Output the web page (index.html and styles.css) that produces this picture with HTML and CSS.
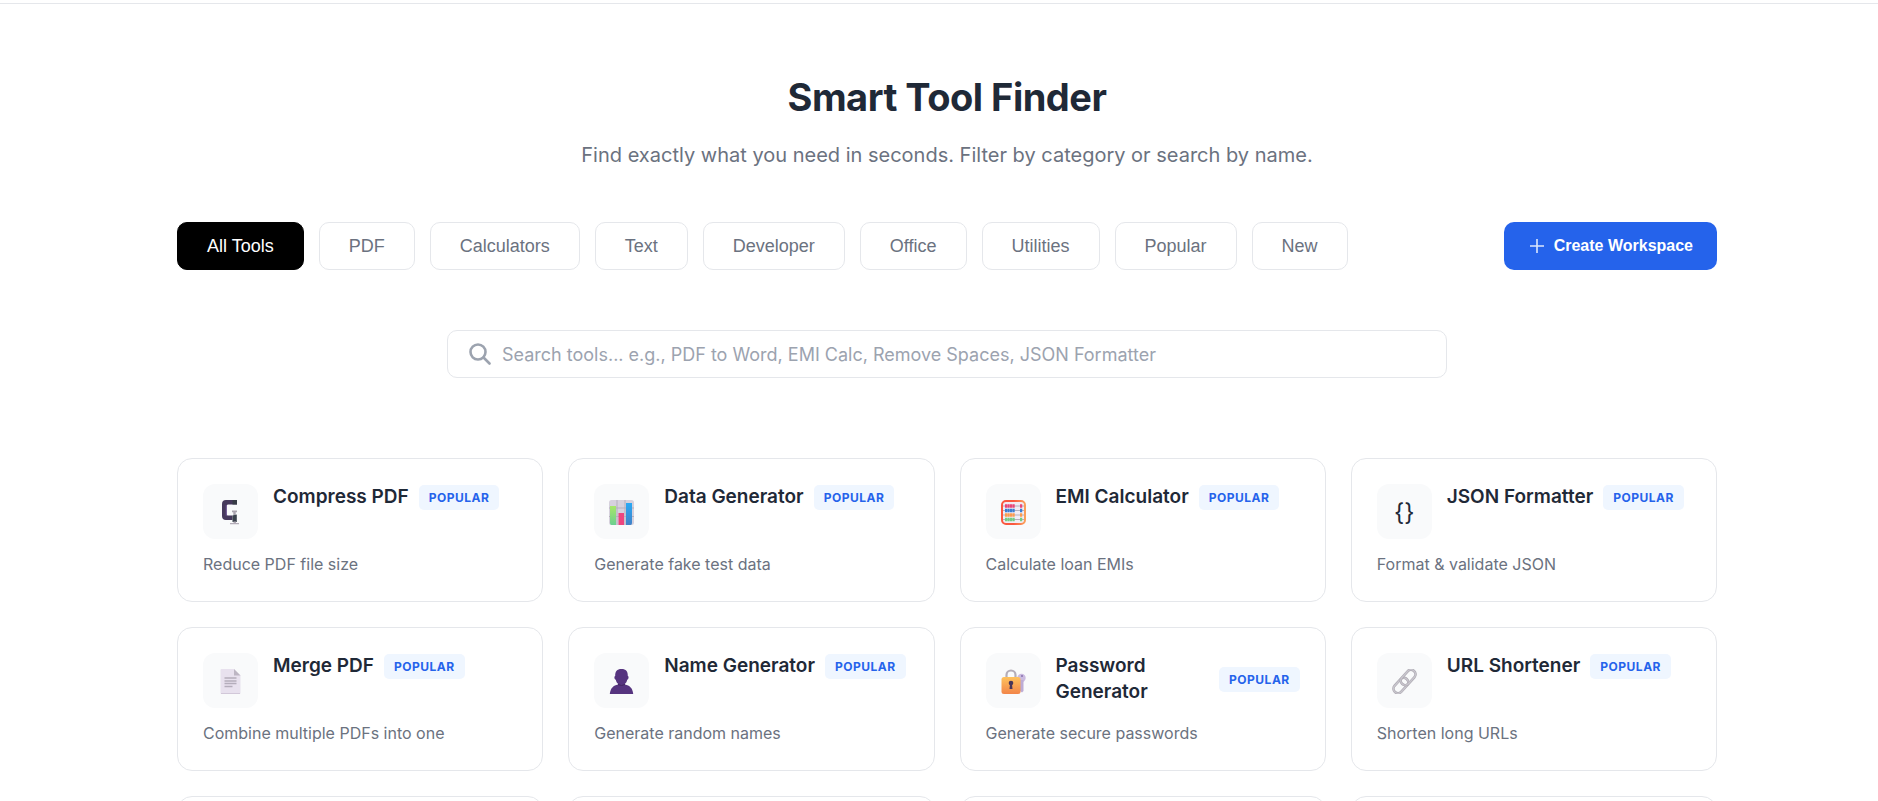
FILE: index.html
```
<!DOCTYPE html>
<html lang="en">
<head>
    <meta charset="UTF-8">
    <meta name="viewport" content="width=device-width, initial-scale=1.0">
    <title>Smart Tool Finder</title>
    <link rel="stylesheet" href="styles.css">
</head>
<body>
    <header class="topbar"></header>

    <main class="finder">
        <div class="finder-header">
            <h1>Smart Tool Finder</h1>
            <p>Find exactly what you need in seconds. Filter by category or search by name.</p>
        </div>

        <div class="toolbar">
            <div class="filters">
                <button type="button" class="filter-btn active">All Tools</button>
                <button type="button" class="filter-btn">PDF</button>
                <button type="button" class="filter-btn">Calculators</button>
                <button type="button" class="filter-btn">Text</button>
                <button type="button" class="filter-btn">Developer</button>
                <button type="button" class="filter-btn">Office</button>
                <button type="button" class="filter-btn">Utilities</button>
                <button type="button" class="filter-btn">Popular</button>
                <button type="button" class="filter-btn">New</button>
            </div>
            <button type="button" class="create-btn">
                <svg width="18" height="18" viewBox="0 0 18 18" fill="none" stroke="#dbe6fd" stroke-width="1.6"><path d="M9 2v14M2 9h14"/></svg>
                Create Workspace
            </button>
        </div>

        <label class="search-box">
            <svg width="22" height="22" viewBox="0 0 22 22" fill="none" stroke="#9ca3af" stroke-width="2.6" stroke-linecap="round"><circle cx="9" cy="9" r="7.5"/><path d="M14.5 14.5l6 6"/></svg>
            <input type="text" aria-label="Search tools" placeholder="Search tools... e.g., PDF to Word, EMI Calc, Remove Spaces, JSON Formatter">
        </label>

        <div class="tools-grid">
            <a href="#" class="tool-card">
                <div class="tool-top">
                    <div class="tool-icon">
                        <!-- clamp -->
                        <svg width="25" height="25" viewBox="0 0 25 25"><path d="M19 0v4.500h-9q-1.500 0-1.500 1.500v8q0 1.500 1.500 1.500h4.500V20H8q-4 0-4-4V4q0-4 4-4z" fill="#46395c"/><path d="M8.200 5v11" stroke="#65488d"/><path d="M14.500 0H19v4.500h-4.500z" fill="#373c46"/><path d="M14 10.500h5v1.800h-1.300v3.700h-2.400v-3.700H14z" fill="#a9a3ae"/><path d="M14.500 15.500l4.300-1v7.500h-4.300z" fill="#3b434d"/><path d="M15.500 21.500H18V23h3v1.300h-9V23h3.500z" fill="#b4adb8"/></svg>
                    </div>
                    <div class="tool-title"><h3>Compress PDF</h3><span class="badge">POPULAR</span></div>
                </div>
                <p>Reduce PDF file size</p>
            </a>
            <a href="#" class="tool-card">
                <div class="tool-top">
                    <div class="tool-icon">
                        <!-- bar chart -->
                        <svg width="25" height="25" viewBox="0 0 25 25"><defs><linearGradient id="bar-green" x2="0" y2="1"><stop stop-color="#a8e768"/><stop offset="1" stop-color="#6bcf91"/></linearGradient><linearGradient id="bar-blue" x2="0" y2="1"><stop stop-color="#29a9f5"/><stop offset="1" stop-color="#4281c7"/></linearGradient></defs><rect width="25" height="25" rx="2.500" fill="#d6d1dd"/><path d="M8 0v25M16 0v25M0 8h25M0 16.500h25" stroke="#b5afbd"/><path d="M1 6h6v19H2.500Q1 25 1 23z" fill="url(#bar-green)"/><path d="M9.500 13h5.500v12H9.500z" fill="#ed457f"/><path d="M17 3h6v20q0 2-1.500 2H17z" fill="url(#bar-blue)"/></svg>
                    </div>
                    <div class="tool-title"><h3>Data Generator</h3><span class="badge">POPULAR</span></div>
                </div>
                <p>Generate fake test data</p>
            </a>
            <a href="#" class="tool-card">
                <div class="tool-top">
                    <div class="tool-icon">
                        <!-- abacus -->
                        <svg width="25" height="25" viewBox="0 0 25 25"><defs><linearGradient id="frame"><stop offset=".5" stop-color="#fa583f"/><stop offset="1" stop-color="#fba05b"/></linearGradient></defs><rect x="1" y="1" width="23" height="23" rx="4" fill="#f0edf5" stroke="url(#frame)" stroke-width="2"/><path d="M2 6h21M2 10.500h21M2 15h21M2 19.500h21" stroke="#a5a0ab" stroke-width=".8"/><g stroke-width="3.600" stroke-dasharray="2.200 .3"><path d="M4 6h10M19 6h2.200" stroke="#e84678"/><path d="M4 10.500h10M19 10.500h2.200" stroke="#397ed3"/><path d="M4 15h10M19 15h2.200" stroke="#fb9c50"/><path d="M4 19.500h10M19 19.500h2.200" stroke="#72cd85"/></g></svg>
                    </div>
                    <div class="tool-title"><h3>EMI Calculator</h3><span class="badge">POPULAR</span></div>
                </div>
                <p>Calculate loan EMIs</p>
            </a>
            <a href="#" class="tool-card">
                <div class="tool-top">
                    <div class="tool-icon">{}</div>
                    <div class="tool-title"><h3>JSON Formatter</h3><span class="badge">POPULAR</span></div>
                </div>
                <p>Format &amp; validate JSON</p>
            </a>
            <a href="#" class="tool-card">
                <div class="tool-top">
                    <div class="tool-icon">
                        <!-- page -->
                        <svg width="25" height="25" viewBox="0 0 25 25"><path d="M2.500 1q0-1 1-1H16l6.500 6.500V24q0 1-1 1h-18q-1 0-1-1z" fill="#e8e1ee"/><path d="M16 0l6.500 6.500H16z" fill="#bdb6c3"/><path d="M6.500 9h12M6.500 12h12M6.500 14.500h12M6.500 17.500h8" stroke="#b4adbb" stroke-width="1.300"/><path d="M3 24.500h19" stroke="#d2c8d9"/></svg>
                    </div>
                    <div class="tool-title"><h3>Merge PDF</h3><span class="badge">POPULAR</span></div>
                </div>
                <p>Combine multiple PDFs into one</p>
            </a>
            <a href="#" class="tool-card">
                <div class="tool-top">
                    <div class="tool-icon">
                        <!-- person -->
                        <svg width="25" height="25" viewBox="0 0 25 25" fill="#56347f"><path d="M12.500 0C8 0 6 2.500 6.200 7c-1.200 0-1 3.500.6 3.800.3 2 1.200 3 2.200 4v2.500h7v-2.500c1-1 1.900-2 2.200-4 1.600-.3 1.800-3.800.6-3.800C19 2.500 17 0 12.500 0z"/><path d="M.8 25c.5-6 3.700-8.500 8.200-9.500h7c4.500 1 7.700 3.500 8.200 9.500z"/><path d="M9 15.500q3.500 2 7 0" fill="none" stroke="#41255f"/></svg>
                    </div>
                    <div class="tool-title"><h3>Name Generator</h3><span class="badge">POPULAR</span></div>
                </div>
                <p>Generate random names</p>
            </a>
            <a href="#" class="tool-card">
                <div class="tool-top">
                    <div class="tool-icon">
                        <!-- padlock with key -->
                        <svg width="25" height="25" viewBox="0 0 25 25"><defs><linearGradient id="lock" x2="0" y2="1"><stop stop-color="#ffc25c"/><stop offset="1" stop-color="#f28549"/></linearGradient></defs><path d="M5.500 9V6a4.500 4.500 0 0 1 9 0v3" fill="none" stroke="#b4adb8" stroke-width="2.200"/><circle cx="20.500" cy="9" r="4.200" fill="#cbbbe0"/><path d="M19 11h3.500v11l-1.500 1.500L19 22z" fill="#bdacd5"/><circle cx="21" cy="7" r="1" fill="#8970ac"/><rect x=".5" y="8" width="19" height="17" rx="2.500" fill="url(#lock)"/><circle cx="10" cy="14" r="2.300" fill="#483559"/><path d="M9 15h2l.5 5h-3z" fill="#483559"/></svg>
                    </div>
                    <div class="tool-title"><h3>Password Generator</h3><span class="badge">POPULAR</span></div>
                </div>
                <p>Generate secure passwords</p>
            </a>
            <a href="#" class="tool-card">
                <div class="tool-top">
                    <div class="tool-icon">
                        <!-- chain link -->
                        <svg width="25" height="25" viewBox="0 0 25 25" fill="none"><g transform="rotate(-48 12.500 12.500)"><rect x="-1.700" y="8" width="17.500" height="9" rx="4.500" stroke="#aaa7af" stroke-width="2.600"/><rect x="-1.700" y="8" width="17.500" height="9" rx="4.500" stroke="#c9c6ce" stroke-width="1.500"/><rect x="9.200" y="8" width="17.500" height="9" rx="4.500" stroke="#aaa7af" stroke-width="2.600"/><rect x="9.200" y="8" width="17.500" height="9" rx="4.500" stroke="#c9c6ce" stroke-width="1.500"/></g></svg>
                    </div>
                    <div class="tool-title"><h3>URL Shortener</h3><span class="badge">POPULAR</span></div>
                </div>
                <p>Shorten long URLs</p>
            </a>
            <a href="#" class="tool-card"></a>
            <a href="#" class="tool-card"></a>
            <a href="#" class="tool-card"></a>
            <a href="#" class="tool-card"></a>
        </div>
    </main>
</body>
</html>
```
FILE: styles.css
```
* {
    margin: 0;
    padding: 0;
    box-sizing: border-box;
}
html {
    height: 100%;
    overflow: hidden;
}
body {
    height: 100%;
    overflow: hidden;
    font-family: Inter, sans-serif;
    background: #fff;
    color: #1f2937;
}
.topbar {
    height: 4px;
    border-bottom: 1px solid #e5e7eb;
}
.finder {
    max-width: 1540px;
    margin: 0 auto;
    padding: 67px 30px 0 46px;
    box-sizing: content-box;
}
.finder-header {
    text-align: center;
    margin-bottom: 50px;
}
.finder-header h1 {
    font-size: 38px;
    font-weight: 700;
    line-height: 52px;
    letter-spacing: -0.5px;
    margin-bottom: 16px;
}
.finder-header p {
    font-size: 20px;
    line-height: 33px;
    color: #6b7280;
}
.toolbar {
    display: flex;
    justify-content: space-between;
    align-items: center;
    margin-bottom: 60px;
}
.filters {
    display: flex;
    gap: 15px;
}
.filter-btn {
    height: 48px;
    padding: 0 29px;
    border: 1px solid #e5e7eb;
    border-radius: 10px;
    background: #fff;
    color: #6b7280;
    font-family: "Liberation Sans", Arial, sans-serif;
    font-size: 18px;
    cursor: pointer;
}
.filter-btn.active {
    background: #000;
    border-color: #000;
    color: #fff;
}
.create-btn {
    display: flex;
    align-items: center;
    gap: 8px;
    height: 48px;
    padding: 0 24px;
    border: none;
    border-radius: 10px;
    background: #2563eb;
    color: #fff;
    font-family: "Liberation Sans", Arial, sans-serif;
    font-size: 16px;
    font-weight: 700;
    cursor: pointer;
}
.search-box {
    display: flex;
    align-items: center;
    gap: 11px;
    max-width: 1000px;
    height: 48px;
    margin: 0 auto 80px;
    padding: 0 21px;
    border: 1px solid #e5e7eb;
    border-radius: 10px;
}
.search-box input {
    flex: 1;
    border: none;
    outline: none;
    background: none;
    font-family: Inter, sans-serif;
    font-size: 18px;
    color: #1f2937;
}
.search-box input::placeholder {
    color: #9ca3af;
}
.tools-grid {
    display: grid;
    grid-template-columns: repeat(4, 1fr);
    gap: 25px;
}
.tool-card {
    min-height: 144px;
    padding: 25px;
    border: 1px solid #e5e7eb;
    border-radius: 15px;
    background: #fff;
    color: #1f2937;
    text-decoration: none;
}
.tool-top {
    display: flex;
    align-items: flex-start;
    gap: 15px;
    margin-bottom: 14px;
}
.tool-icon {
    display: flex;
    align-items: center;
    justify-content: center;
    flex-shrink: 0;
    width: 55px;
    height: 55px;
    padding-top: 2px;
    border-radius: 12px;
    background: #f9fafb;
    font-size: 24px;
}
.tool-title {
    flex: 1;
    display: flex;
    align-items: center;
    gap: 10px;
}
.tool-title h3 {
    font-size: 19px;
    font-weight: 600;
    line-height: 26px;
}
.badge {
    padding: 0 10px;
    border-radius: 5px;
    background: #eff6ff;
    color: #2563eb;
    font-size: 12px;
    font-weight: 700;
    line-height: 25px;
    letter-spacing: 0.5px;
}
.tool-card p {
    font-size: 16px;
    line-height: 22px;
    color: #6b7280;
}
```
